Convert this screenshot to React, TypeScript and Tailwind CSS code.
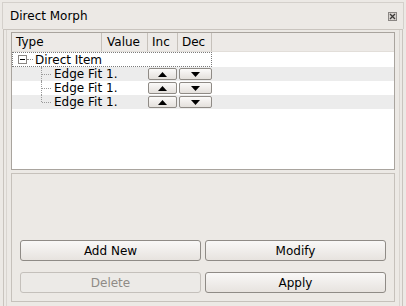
import React from 'react';

type Row = { label: string; value: string; shaded: boolean; last: boolean };

const rows: Row[] = [
  { label: 'Edge Fit', value: '1.', shaded: true, last: false },
  { label: 'Edge Fit', value: '1.', shaded: false, last: false },
  { label: 'Edge Fit', value: '1.', shaded: true, last: true },
];

const ArrowButton: React.FC<{ up: boolean; w: string }> = ({ up, w }) => (
  <div
    className={`${w} h-[12px] rounded-[2px] border border-[#8f8b86] bg-gradient-to-b from-[#fbfaf9] to-[#e4e0dc] flex items-center justify-center`}
  >
    <svg width="9" height="5" viewBox="0 0 9 5">
      {up ? <path d="M0 5 L4.5 0 L9 5 Z" fill="#000" /> : <path d="M0 0 L4.5 5 L9 0 Z" fill="#000" />}
    </svg>
  </div>
);

const PushButton: React.FC<{ label: string; disabled?: boolean }> = ({ label, disabled }) => (
  <button
    className={`h-[21px] flex-1 rounded-[3px] border text-[12px] leading-none ${
      disabled
        ? 'border-[#c4c0bb] bg-[#eceae7] text-[#8f8b86]'
        : 'border-[#8f8b86] bg-gradient-to-b from-[#f9f8f7] to-[#e7e3df] text-black'
    }`}
  >
    {label}
  </button>
);

export default function App() {
  return (
    <div
      className="w-[406px] h-[306px] bg-[#ece9e5] text-[12px] text-black flex flex-col overflow-hidden whitespace-nowrap"
      style={{ fontFamily: '"DejaVu Sans", sans-serif' }}
    >
      {/* title bar */}
      <div className="h-[27px] mx-[2px] mt-[2px] border-t border-x border-[#d4d0cb] flex items-center justify-between pl-[7px] pr-[6px]">
        <span>Direct Morph</span>
        <div className="w-[9px] h-[9px] border border-[#8a8683] bg-[#d8d4d0] flex items-center justify-center">
          <svg width="7" height="7" viewBox="0 0 7 7">
            <path d="M1 1 L6 6 M6 1 L1 6" stroke="#3c3a38" strokeWidth="1.3" />
          </svg>
        </div>
      </div>

      {/* dock body */}
      <div className="flex-1 mx-[3px] border-l border-r border-t border-[#c9c4be] flex">
        <div className="flex-1 ml-[2px] mr-[2px] border-l border-r border-[#d9d5d0] flex flex-col px-[4px] pt-[2px] pb-[4px] gap-[3px]">
          {/* tree widget */}
          <div className="h-[138px] border border-[#a9a49e] bg-white flex flex-col">
            <div className="h-[19px] shrink-0 bg-[#edeae7] border-b border-[#e2ded9] flex items-center">
              <div className="w-[90px] h-full border-r border-[#c6c1bb] flex items-center pl-[4px]">Type</div>
              <div className="w-[46px] h-full border-r border-[#c6c1bb] flex items-center pl-[5px]">Value</div>
              <div className="w-[30px] h-full border-r border-[#c6c1bb] flex items-center pl-[4px]">Inc</div>
              <div className="w-[34px] h-full border-r border-[#c6c1bb] flex items-center pl-[4px]">Dec</div>
            </div>
            <div className="w-[200px] h-[15px] shrink-0 border border-dotted border-[#7b7b7b] flex items-center">
              <div className="w-[9px] h-[9px] ml-[5px] border border-[#8a8683] flex items-center justify-center">
                <div className="w-[5px] h-[1px] bg-black" />
              </div>
              <div className="w-[6px] border-t border-dotted border-[#8a8683]" />
              <span className="ml-[2px]">Direct Item</span>
            </div>
            {rows.map((r, i) => (
              <div key={i} className={`h-[14px] shrink-0 flex items-center ${r.shaded ? 'bg-[#ececec]' : 'bg-white'}`}>
                <div className="w-[90px] h-full flex items-center">
                  <div className="relative w-[42px] h-full shrink-0">
                    <div
                      className={`absolute left-[29px] top-0 border-l border-dotted border-[#9a9a9a] ${r.last ? 'h-[7px]' : 'h-full'}`}
                    />
                    <div className="absolute left-[30px] top-[7px] w-[9px] border-t border-dotted border-[#9a9a9a]" />
                  </div>
                  <span>{r.label}</span>
                </div>
                <div className="w-[46px] pl-[4px]">{r.value}</div>
                <div className="flex gap-[2px]">
                  <ArrowButton up w="w-[29px]" />
                  <ArrowButton up={false} w="w-[33px]" />
                </div>
              </div>
            ))}
          </div>

          {/* group box */}
          <div className="flex-1 border border-[#c6c1bb] flex flex-col justify-end px-[8px] pb-[8px] gap-[11px]">
            <div className="flex gap-[4px]">
              <PushButton label="Add New" />
              <PushButton label="Modify" />
            </div>
            <div className="flex gap-[4px]">
              <PushButton label="Delete" disabled />
              <PushButton label="Apply" />
            </div>
          </div>
        </div>
      </div>
    </div>
  );
}
